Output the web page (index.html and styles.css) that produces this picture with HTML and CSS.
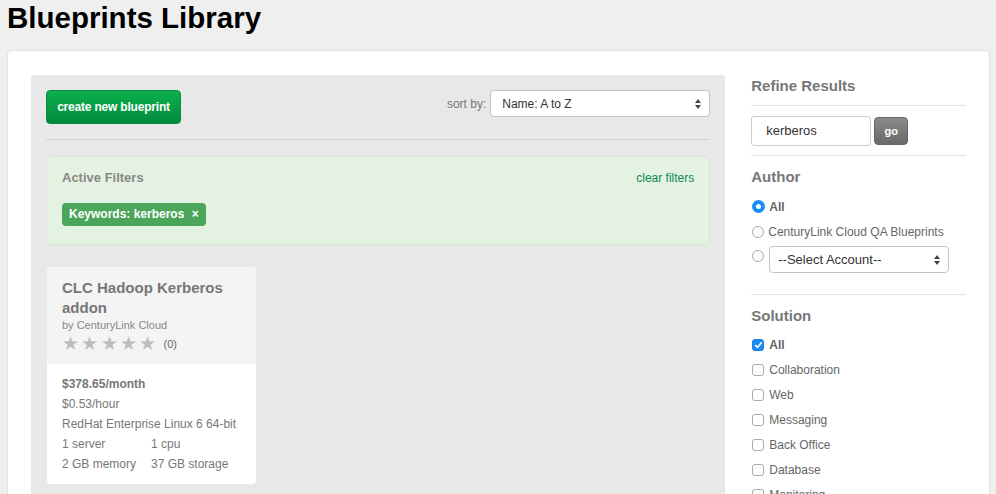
FILE: index.html
```html
<!DOCTYPE html>
<html>
<head>
<meta charset="utf-8">
<link rel="stylesheet" href="styles.css">
</head>
<body>
<h1 class="page-title">Blueprints Library</h1>
<div class="panel">
  <div class="main">
    <div class="toolbar">
      <button class="btn-create">create new blueprint</button>
      <div class="sort">
        <span class="sort-label">sort by:</span>
        <div class="select sort-select"><span>Name: A to Z</span><svg class="arrows" width="6" height="10" viewBox="0 0 6 10"><path d="M0 4 L3 0 L6 4 Z M0 6 L3 10 L6 6 Z" fill="#444"/></svg></div>
      </div>
    </div>
    <div class="rule"></div>
    <div class="filters">
      <div class="filters-head">
        <span class="filters-title">Active Filters</span>
        <a class="clear">clear filters</a>
      </div>
      <span class="tag">Keywords: kerberos <span class="tag-x">×</span></span>
    </div>
    <div class="card">
      <div class="card-top">
        <div class="card-title">CLC Hadoop Kerberos addon</div>
        <div class="card-by">by CenturyLink Cloud</div>
        <div class="stars"><span class="star">★</span><span class="star">★</span><span class="star">★</span><span class="star">★</span><span class="star">★</span><span class="count">(0)</span></div>
      </div>
      <div class="card-body">
        <div class="row strong">$378.65/month</div>
        <div class="row">$0.53/hour</div>
        <div class="row">RedHat Enterprise Linux 6 64-bit</div>
        <div class="row cols"><span>1 server</span><span>1 cpu</span></div>
        <div class="row cols"><span>2 GB memory</span><span>37 GB storage</span></div>
      </div>
    </div>
  </div>
  <div class="side">
    <h2 class="side-h">Refine Results</h2>
    <div class="side-rule"></div>
    <div class="search">
      <div class="input">kerberos</div>
      <button class="go">go</button>
    </div>
    <div class="side-rule"></div>
    <h2 class="side-h">Author</h2>
    <div class="opt"><span class="radio on"></span><span class="bold">All</span></div>
    <div class="opt"><span class="radio"></span><span>CenturyLink Cloud QA Blueprints</span></div>
    <div class="opt opt-sel"><span class="radio"></span><div class="select acct"><span>--Select Account--</span><svg class="arrows" width="6" height="10" viewBox="0 0 6 10"><path d="M0 4 L3 0 L6 4 Z M0 6 L3 10 L6 6 Z" fill="#444"/></svg></div></div>
    <div class="side-rule r2"></div>
    <h2 class="side-h">Solution</h2>
    <div class="chk"><span class="box on"><svg width="9" height="8" viewBox="0 0 9 8"><path d="M1.2 4.2 L3.5 6.4 L7.8 1.2" fill="none" stroke="#fff" stroke-width="1.6"/></svg></span><span class="bold">All</span></div>
    <div class="chk"><span class="box"></span><span>Collaboration</span></div>
    <div class="chk"><span class="box"></span><span>Web</span></div>
    <div class="chk"><span class="box"></span><span>Messaging</span></div>
    <div class="chk"><span class="box"></span><span>Back Office</span></div>
    <div class="chk"><span class="box"></span><span>Database</span></div>
    <div class="chk"><span class="box"></span><span>Monitoring</span></div>
  </div>
</div>
</body>
</html>
```

FILE: styles.css
```css
html, body {
  margin: 0;
  padding: 0;
}
body {
  background: #efefef;
  font-family: "Liberation Sans", Arial, sans-serif;
  color: #666;
  overflow: hidden;
  height: 494px;
}
.page-title {
  margin: 2px 0 0 0;
  padding-left: 7px;
  font-size: 29.5px;
  line-height: 32px;
  color: #000;
  font-weight: bold;
}
.panel {
  margin: 16px 6px 0 7px;
  background: #fff;
  border: 1px solid #e2e2e2;
  border-radius: 4px;
  padding: 24px 23px 0 23px;
  display: flex;
  gap: 26px;
  height: 500px;
}
.main {
  width: 665px;
  background: #e8e8e8;
  border-radius: 4px;
  padding: 15px 15px 0 15px;
}
.toolbar {
  display: flex;
  justify-content: space-between;
  align-items: flex-start;
}
.btn-create {
  width: 135px;
  height: 34px;
  border: 1px solid #0a8a40;
  border-radius: 4px;
  background: linear-gradient(#0cb04c, #008a3e);
  color: #fff;
  font-family: "Liberation Sans", Arial, sans-serif;
  font-weight: bold;
  font-size: 12px;
  padding: 0;
  letter-spacing: -0.2px;
}
.sort {
  display: flex;
  align-items: center;
  gap: 4px;
}
.sort-label {
  font-size: 12px;
  color: #777;
}
.select {
  background: #fff;
  border: 1px solid #c4c4c4;
  border-radius: 4px;
  box-sizing: border-box;
  display: flex;
  align-items: center;
  justify-content: space-between;
  font-size: 13px;
  color: #333;
}
.sort-select {
  width: 220px;
  height: 27px;
  padding: 0 8px 0 11px;
  font-size: 12px;
}
.arrows {
  flex: none;
}
.rule {
  height: 1px;
  background: #cfcfcf;
  margin: 15px 0 16px 0;
}
.filters {
  background: #e4f2e1;
  border: 1px solid #d6e8d2;
  border-radius: 4px;
  padding: 13px 15px 19px 15px;
  height: 55px;
}
.filters-head {
  display: flex;
  justify-content: space-between;
  align-items: baseline;
}
.filters-title {
  font-size: 13px;
  font-weight: bold;
  color: #888;
}
.clear {
  font-size: 12px;
  color: #0b8a55;
}
.tag {
  display: inline-block;
  margin-top: 18px;
  background: #4ba55b;
  color: #fff;
  font-size: 12px;
  font-weight: bold;
  border-radius: 4px;
  padding: 4px 7px 5px 7px;
  line-height: 14px;
}
.tag-x {
  margin-left: 4px;
  font-size: 12px;
}
.card {
  margin-top: 22px;
  width: 209px;
  background: #fff;
  border-radius: 4px;
  overflow: hidden;
  margin-left: 1px;
}
.card-top {
  background: #f4f4f4;
  padding: 11px 15px 10px 15px;
}
.card-title {
  font-size: 15px;
  font-weight: bold;
  color: #777;
  line-height: 20px;
}
.card-by {
  font-size: 11px;
  color: #888;
  line-height: 14px;
  margin-top: 0;
}
.stars {
  display: flex;
  align-items: center;
  margin-top: 2px;
  height: 20px;
}
.star {
  font-size: 19px;
  color: #bdbdbd;
  width: 19.3px;
  line-height: 20px;
}
.count {
  font-size: 11px;
  color: #666;
  margin-left: 5px;
}
.card-body {
  padding: 10px 15px 10px 15px;
}
.row {
  font-size: 12px;
  line-height: 20px;
  color: #777;
}
.row.strong {
  font-weight: bold;
}
.cols span {
  display: inline-block;
}
.cols span:first-child {
  width: 89px;
}
.side {
  width: 215px;
}
.side-h {
  margin: 0;
  font-size: 15px;
  font-weight: bold;
  color: #777;
  line-height: 20px;
  padding-top: 1px;
}
.side-rule {
  height: 1px;
  background: #e3e3e3;
  margin: 9px 0 10px 0;
}
.side-rule.r2 {
  margin-top: 20px;
  margin-bottom: 10px;
}
.search {
  display: flex;
  align-items: center;
  gap: 3px;
}
.input {
  width: 120px;
  height: 30px;
  box-sizing: border-box;
  border: 1px solid #ccc;
  border-radius: 3px;
  font-size: 13px;
  color: #333;
  padding: 6px 14px;
}
.go {
  width: 34px;
  height: 28px;
  border: 1px solid #666;
  border-radius: 4px;
  background: linear-gradient(#8a8a8a, #6a6a6a);
  color: #fff;
  font-family: "Liberation Sans", Arial, sans-serif;
  font-size: 11px;
  font-weight: bold;
  padding: 0;
}
.opt {
  display: flex;
  align-items: center;
  gap: 4px;
  font-size: 12px;
  color: #666;
  height: 25px;
}
.side-h + .opt {
  margin-top: 7px;
}
.bold {
  font-weight: bold;
}
.radio {
  width: 12px;
  height: 12px;
  border-radius: 50%;
  border: 1px solid #aaa;
  background: #fff;
  box-sizing: border-box;
  flex: none;
  margin-left: 1px;
}
.radio.on {
  border: 4px solid #1a8cf5;
  background: #fff;
  width: 13px;
  height: 13px;
}
.opt-sel {
  height: 28px;
  align-items: flex-start;
  padding-top: 2px;
  gap: 5px;
}
.opt-sel .radio {
  margin-top: 4px;
}
.acct {
  width: 180px;
  height: 27px;
  padding: 0 8px 0 8px;
  color: #333;
}
.chk {
  display: flex;
  align-items: center;
  gap: 5px;
  font-size: 12px;
  color: #666;
  height: 25px;
}
.side-h + .chk {
  margin-top: 6px;
}
.box {
  width: 12px;
  height: 12px;
  box-sizing: border-box;
  border: 1px solid #aaa;
  border-radius: 3px;
  background: #fff;
  display: flex;
  align-items: center;
  justify-content: center;
  flex: none;
  margin-left: 1px;
}
.box.on {
  background: #1a8cf5;
  border-color: #1a7fe0;
}
```
